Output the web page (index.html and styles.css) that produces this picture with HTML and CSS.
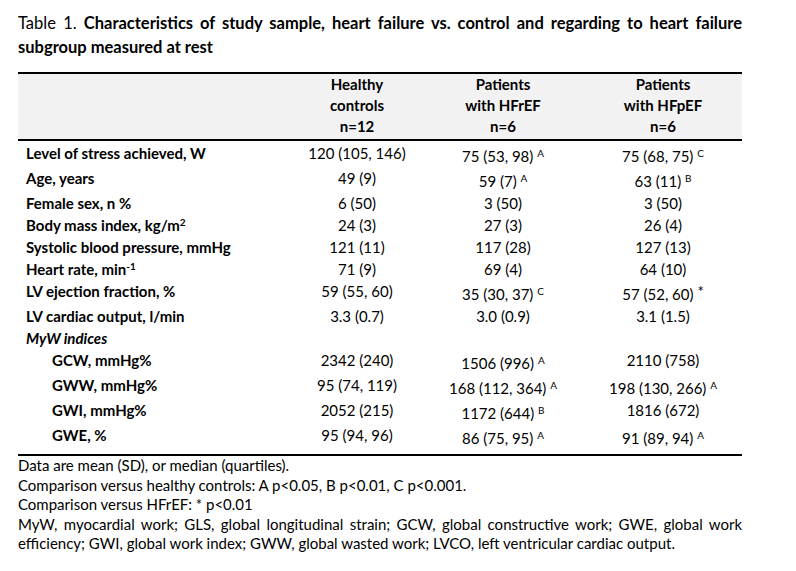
FILE: index.html
```html
<!DOCTYPE html>
<html lang="en">
<head>
<meta charset="utf-8">
<title>Table 1</title>
<link rel="stylesheet" href="styles.css">
</head>
<body>
<div class="page">
  <div class="caption">
    <span class="jline">Table 1. <b>Characteristics of study sample, heart failure vs. control and regarding to heart failure</b></span>
    <span class="line"><b>subgroup measured at rest</b></span>
  </div>
  <table class="data">
    <colgroup>
      <col class="c1"><col class="c2"><col class="c3"><col class="c4">
    </colgroup>
    <thead>
      <tr>
        <th></th>
        <th>Healthy<br>controls<br>n=12</th>
        <th>Patients<br>with HFrEF<br>n=6</th>
        <th>Patients<br>with HFpEF<br>n=6</th>
      </tr>
    </thead>
    <tbody>
      <tr><td class="lab">Level of stress achieved, W</td><td>120 (105, 146)</td><td>75 (53, 98) <sup class="m">A</sup></td><td>75 (68, 75) <sup class="m">C</sup></td></tr>
      <tr><td class="lab">Age, years</td><td>49 (9)</td><td>59 (7) <sup class="m">A</sup></td><td>63 (11) <sup class="m">B</sup></td></tr>
      <tr><td class="lab">Female sex, n %</td><td>6 (50)</td><td>3 (50)</td><td>3 (50)</td></tr>
      <tr><td class="lab">Body mass index, kg/m<sup class="u">2</sup></td><td>24 (3)</td><td>27 (3)</td><td>26 (4)</td></tr>
      <tr><td class="lab">Systolic blood pressure, mmHg</td><td>121 (11)</td><td>117 (28)</td><td>127 (13)</td></tr>
      <tr><td class="lab">Heart rate, min<sup class="u">-1</sup></td><td>71 (9)</td><td>69 (4)</td><td>64 (10)</td></tr>
      <tr><td class="lab">LV ejection fraction, %</td><td>59 (55, 60)</td><td>35 (30, 37) <sup class="m">C</sup></td><td>57 (52, 60) <sup class="m ast">*</sup></td></tr>
      <tr><td class="lab">LV cardiac output, l/min</td><td>3.3 (0.7)</td><td>3.0 (0.9)</td><td>3.1 (1.5)</td></tr>
      <tr><td class="lab"><i>MyW indices</i></td><td></td><td></td><td></td></tr>
      <tr><td class="lab sub">GCW, mmHg%</td><td>2342 (240)</td><td>1506 (996) <sup class="m">A</sup></td><td>2110 (758)</td></tr>
      <tr><td class="lab sub">GWW, mmHg%</td><td>95 (74, 119)</td><td>168 (112, 364) <sup class="m">A</sup></td><td>198 (130, 266) <sup class="m">A</sup></td></tr>
      <tr><td class="lab sub">GWI, mmHg%</td><td>2052 (215)</td><td>1172 (644) <sup class="m">B</sup></td><td>1816 (672)</td></tr>
      <tr class="last"><td class="lab sub">GWE, %</td><td>95 (94, 96)</td><td>86 (75, 95) <sup class="m">A</sup></td><td>91 (89, 94) <sup class="m">A</sup></td></tr>
    </tbody>
  </table>
  <div class="notes">
    <span class="line">Data are mean (SD), or median (quartiles).</span>
    <span class="line">Comparison versus healthy controls: A p&lt;0.05, B p&lt;0.01, C p&lt;0.001.</span>
    <span class="line">Comparison versus HFrEF: * p&lt;0.01</span>
    <span class="jline">MyW, myocardial work; GLS, global longitudinal strain; GCW, global constructive work; GWE, global work</span>
    <span class="line">efficiency; GWI, global work index; GWW, global wasted work; LVCO, left ventricular cardiac output.</span>
  </div>
</div>
</body>
</html>
```

FILE: styles.css
```css
html, body {
  margin: 0;
  padding: 0;
  background: #ffffff;
}
body {
  font-family: Lato, "Open Sans", sans-serif;
  color: #000000;
  font-size: 15px;
}
.page {
  width: 724px;
  margin-left: 18px;
  padding-top: 12px;
}
.caption {
  font-size: 16.5px;
  line-height: 23.5px;
}
.line {
  display: block;
}
.jline {
  display: block;
  text-align: justify;
  text-align-last: justify;
}
.data {
  margin-top: 13px;
  width: 724px;
  border-collapse: collapse;
  table-layout: fixed;
  border-top: 2px solid #000;
  border-bottom: 2px solid #000;
}
.c1 { width: 274px; }
.c2 { width: 130px; }
.c3 { width: 162px; }
.c4 { width: 158px; }
.data thead th {
  background: #f2f2f2;
  font-weight: bold;
  line-height: 21px;
  padding: 0 0 2px;
  text-align: center;
  border-bottom: 2px solid #000;
}
.data td {
  padding: 2px 0 0;
  line-height: 20px;
  text-align: center;
  vertical-align: top;
}
.data td.lab {
  text-align: left;
  font-weight: bold;
  padding-left: 8px;
}
.data td.sub {
  padding-left: 34px;
}
.data tr.last td {
  padding-bottom: 6px;
}
sup.m {
  font-size: 10px;
  line-height: 20px;
  vertical-align: 5px;
}
sup.ast {
  font-size: 15px;
  vertical-align: 3px;
}
sup.u {
  font-size: 10px;
  line-height: 10px;
  vertical-align: 5px;
}
.notes {
  padding-top: 0;
  line-height: 19.5px;
}
```
